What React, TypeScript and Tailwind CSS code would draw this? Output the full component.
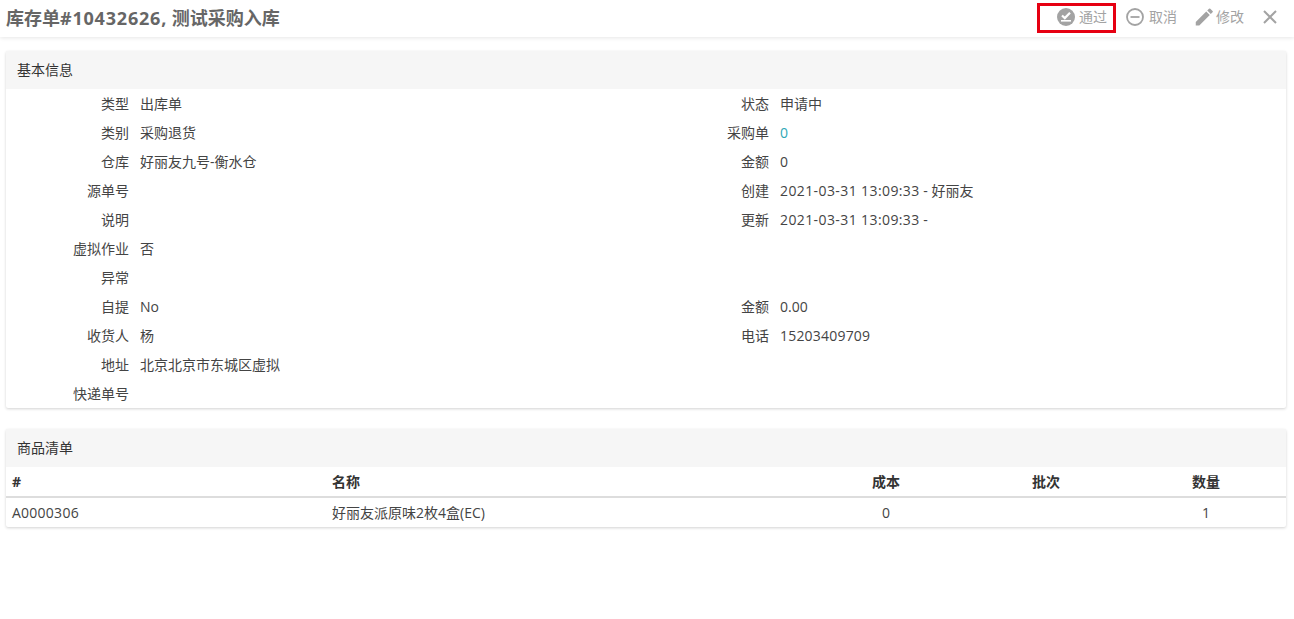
const font = { fontFamily: '"Open Sans", "Noto Sans CJK SC", sans-serif' }

const rows: [string, React.ReactNode, string?, React.ReactNode?][] = [
  ['类型', '出库单', '状态', '申请中'],
  ['类别', '采购退货', '采购单', <span className="text-[#2fa7b5]">0</span>],
  ['仓库', '好丽友九号-衡水仓', '金额', '0'],
  ['源单号', '', '创建', <><span className="tracking-[0.4px]">2021-03-31 13:09:33</span> - 好丽友</>],
  ['说明', '', '更新', <><span className="tracking-[0.4px]">2021-03-31 13:09:33</span> -</>],
  ['虚拟作业', '否'],
  ['异常', ''],
  ['自提', 'No', '金额', '0.00'],
  ['收货人', '杨', '电话', <span className="tracking-[0.2px]">15203409709</span>],
  ['地址', '北京北京市东城区虚拟'],
  ['快递单号', ''],
]

function Field({ label, value }: { label?: string; value?: React.ReactNode }) {
  return (
    <div className="flex h-[29px] items-center">
      <div className="w-[124px] pr-px text-right">{label}</div>
      <div className="pl-[10px]">{value}</div>
    </div>
  )
}

function PanelTitle({ children }: { children: React.ReactNode }) {
  return <div className="flex h-[38px] items-center bg-[#f6f6f6] px-[11px] pb-[2px] text-[#333]">{children}</div>
}

export default function App() {
  return (
    <div style={font} className="min-h-[619px] bg-white text-[14px] text-[#444]">
      <header className="flex h-[37px] items-center justify-between pl-[6px] pr-[17px] shadow-[0_1px_4px_rgba(0,0,0,0.1)]">
        <h1 className="text-[18px] font-bold text-[#666]">
          库存单<span className="tracking-[0.8px]">#10432626,</span> 测试采购入库
        </h1>
        <div className="flex h-full items-start pt-[3px] text-[#a3a3a3]">
          <div className="flex h-[30px] w-[79px] items-center justify-end gap-[4px] border-[3px] border-[#e60012] pr-[6px] pb-[3px]">
            <svg width="18" height="18" viewBox="0 0 18 18">
              <circle cx="9" cy="9" r="9" fill="#a3a3a3" />
              <path d="M5 7.5l2.8 2.6L13 4.8" fill="none" stroke="#fff" strokeWidth="2.2" />
              <path d="M4 12.8h10" stroke="#fff" strokeWidth="1.6" />
            </svg>
            <span>通过</span>
          </div>
          <div className="ml-[10px] flex h-[27px] items-center gap-[5px]">
            <svg width="18" height="18" viewBox="0 0 18 18">
              <circle cx="9" cy="9" r="8" fill="none" stroke="#a3a3a3" strokeWidth="1.8" />
              <path d="M4.5 9h9" stroke="#a3a3a3" strokeWidth="1.8" />
            </svg>
            <span>取消</span>
          </div>
          <div className="ml-[18px] flex h-[27px] items-center gap-[3px]">
            <svg width="18" height="18" viewBox="2.2 2.5 19 19" fill="#a3a3a3">
              <path d="M3 17.25V21h3.75L17.81 9.94l-3.75-3.75L3 17.25zM20.71 7.04a1 1 0 0 0 0-1.41l-2.34-2.34a1 1 0 0 0-1.41 0l-1.83 1.83 3.75 3.75 1.83-1.83z" />
            </svg>
            <span>修改</span>
          </div>
          <div className="ml-[19px] flex h-[27px] items-center">
            <svg width="14" height="14" viewBox="0 0 14 14">
              <path d="M1 1l12 12M13 1L1 13" stroke="#a3a3a3" strokeWidth="2" />
            </svg>
          </div>
        </div>
      </header>

      <main className="pl-[6px] pr-[8px] pt-[14px]">
        <section className="rounded-[2px] shadow-[0_1px_3px_rgba(0,0,0,0.18)]">
          <PanelTitle>基本信息</PanelTitle>
          <div>
            {rows.map(([l1, v1, l2, v2], i) => (
              <div key={i} className="grid grid-cols-2">
                <Field label={l1} value={v1} />
                <Field label={l2} value={v2} />
              </div>
            ))}
          </div>
        </section>

        <section className="mt-[21px] rounded-[2px] shadow-[0_1px_3px_rgba(0,0,0,0.18)]">
          <PanelTitle>商品清单</PanelTitle>
          <div className="grid h-[31px] grid-cols-[320px_540px_160px_160px_100px] items-center border-b-2 border-[#ddd] font-bold text-[#333]">
            <div className="pl-[6px]">#</div>
            <div className="pl-[6px]">名称</div>
            <div className="pl-[6px]">成本</div>
            <div className="pl-[6px]">批次</div>
            <div className="pl-[6px]">数量</div>
          </div>
          <div className="grid h-[29px] grid-cols-[320px_540px_160px_160px_100px] items-center">
            <div className="pl-[6px] tracking-[0.25px]">A0000306</div>
            <div className="pl-[6px]">好丽友派原味2枚4盒(EC)</div>
            <div className="pl-[6px]"><span className="inline-block w-[28px] text-center">0</span></div>
            <div className="pl-[6px]"></div>
            <div className="pl-[6px]"><span className="inline-block w-[28px] text-center">1</span></div>
          </div>
        </section>
      </main>
    </div>
  )
}
